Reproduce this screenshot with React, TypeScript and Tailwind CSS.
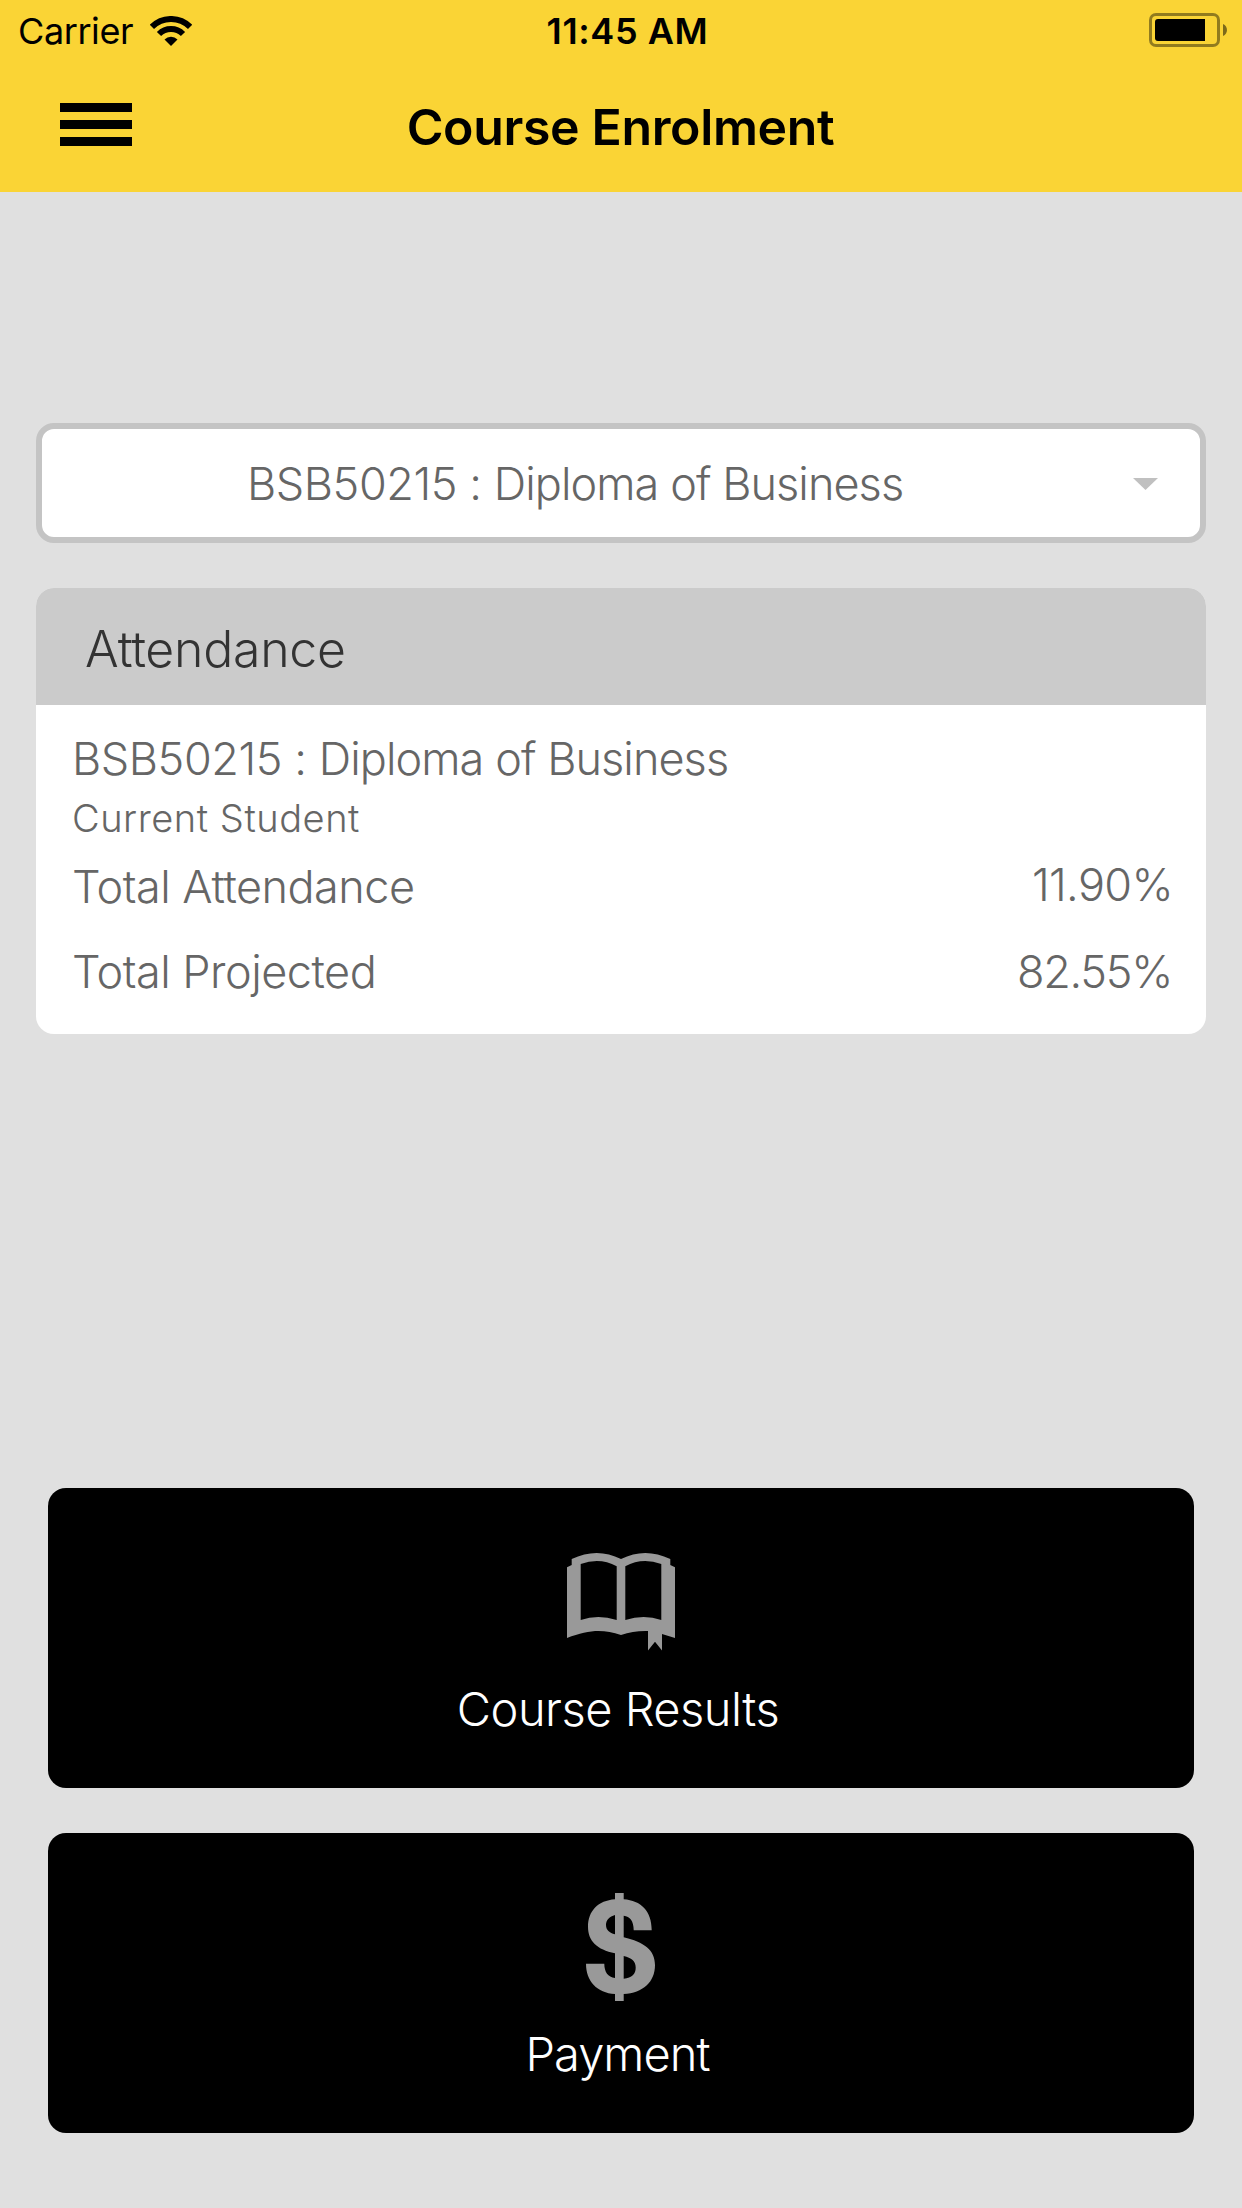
import type { ReactNode } from "react";

function WifiIcon() {
  return (
    <svg className="h-[30px] w-[42px]" viewBox="0 0 42 30" fill="none" stroke="#000" strokeWidth="6">
      <path d="M1.9 10.9A27 27 0 0 1 40.1 10.9" />
      <path d="M9 18A17 17 0 0 1 33 18" />
      <path d="M21 30L14.5 23.4A9.5 9.5 0 0 1 27.5 23.4Z" fill="#000" stroke="none" />
    </svg>
  );
}

function BatteryIcon() {
  return (
    <svg className="h-[34px] w-[78px]" viewBox="0 0 78 34">
      <rect x="1.5" y="1.5" width="68" height="31" rx="5.5" fill="none" stroke="#000" strokeOpacity="0.42" strokeWidth="3" />
      <path d="M9 6H56V28H9Q6 28 6 25V9Q6 6 9 6Z" />
      <path d="M74 11C79.300 13 79.300 21 74 23Z" fillOpacity="0.5" />
    </svg>
  );
}

function MenuIcon() {
  return (
    <div className="flex h-[43px] w-[72px] flex-col justify-between">
      <div className="h-[9px] bg-black" />
      <div className="h-[9px] bg-black" />
      <div className="h-[9px] bg-black" />
    </div>
  );
}

function BookIcon() {
  return (
    <svg className="h-[98px] w-[108px]" viewBox="0 0 108 98" fill="#999999" fillRule="evenodd">
      <path d="M0 14.300L4.700 12V6Q30 -6 54 6Q78 -6 103.300 6V12L108 14.300V85L95 81V97.500L88 88.700L81 97.500V78Q67 77.500 54 82C36 76 22 76.500 0 85ZM13.700 11V67Q31 61 49.700 67V13.300Q33 4 13.700 11ZM94.300 11V67Q77 61 58.300 67V13.300Q75 4 94.300 11Z" />
    </svg>
  );
}

function DollarIcon() {
  return (
    <svg className="mr-[2px] h-[108px] w-[69px]" viewBox="0 0 69 108" fill="#999999" fillRule="evenodd">
      <path d="M29 0H37.700V6.300C55 7.500 65.700 18 65.700 37.300H47.700C47.700 28 44 23.500 37.700 22.700V44.300C58 49 69 57 69 72C69 89 57 100 37.700 101V108H29V101C11 100 0 88 0 70.700H18.300C18.300 79 22 84 29 85V60.300C11 56.500 2 48 2 33.700C2 18 12 7.500 29 6.300ZM29 22C23.500 23.500 20 27 20 32C20 37 23.500 40 29 41.300ZM37.700 63V85.700C46 85 49.700 81 49.700 74.700C49.700 68 45.500 65 37.700 63Z" />
    </svg>
  );
}

function StatusBar() {
  return (
    <div className="grid h-[62px] grid-cols-3 items-center pl-[18px] pr-[15px]">
      <div className="flex items-center gap-[17px]">
        <span className="text-[36px] tracking-[-0.41px]">Carrier</span>
        <WifiIcon />
      </div>
      <span className="pl-[10px] text-center text-[36px] font-semibold tracking-[0.6px]">11:45 AM</span>
      <div className="mb-[2px] flex justify-end">
        <BatteryIcon />
      </div>
    </div>
  );
}

function CourseName() {
  return (
    <span>
      <span className="tracking-[-0.42px]">BSB50215 : </span>
      <span className="tracking-[-0.93px]">Diploma of Business</span>
    </span>
  );
}

function AttendanceRow({ label, value, className, valueClass }: { label: string; value: string; className: string; valueClass: string }) {
  return (
    <div className={`flex items-center justify-between text-[45px] ${className}`}>
      <span className="tracking-[-0.5px]">{label}</span>
      <span className={valueClass}>{value}</span>
    </div>
  );
}

function ActionButton({ className, children }: { className: string; children: ReactNode }) {
  return (
    <button className={`flex h-[300px] w-full flex-col items-center rounded-[18px] bg-black text-[47px] font-light leading-[60px] text-white ${className}`}>
      {children}
    </button>
  );
}

export default function App() {
  return (
    <div className="flex h-[2208px] w-[1242px] flex-col overflow-hidden bg-[#e0e0e0] font-['Inter',sans-serif] leading-none whitespace-nowrap text-black">
      <header className="h-[192px] bg-[#fad435]">
        <StatusBar />
        <div className="grid h-[130px] grid-cols-[1fr_auto_1fr] items-center px-[60px]">
          <div className="mb-[5px]">
            <MenuIcon />
          </div>
          <h1 className="pr-px text-[50px] font-semibold tracking-[-0.35px]">Course Enrolment</h1>
          <span />
        </div>
      </header>

      <main className="flex flex-1 flex-col px-[36px] pt-[231px] font-light text-[#666666]">
        <div className="flex h-[120px] items-center justify-between rounded-[18px] border-[6px] border-[#c4c4c4] bg-white pl-[205px] pr-[42px] text-[45px]">
          <CourseName />
          <svg className="mt-[2px] h-[12px] w-[25px]" viewBox="0 0 25 12" fill="#c0c0c0">
            <path d="M0 0H25L12.500 12Z" />
          </svg>
        </div>

        <section className="mt-[45px] h-[446px] overflow-hidden rounded-[18px] bg-white">
          <h2 className="flex h-[117px] items-center bg-[#cbcbcb] pt-[5px] pl-[49px] text-[50px] tracking-[-0.28px] text-[#333333]">
            Attendance
          </h2>
          <div className="pt-[27px] pr-[33px] pl-[36px]">
            <p className="text-[45px] leading-[54px]">
              <CourseName />
            </p>
            <p className="text-[38px] leading-[64px] tracking-[0.54px]">Current Student</p>
            <AttendanceRow label="Total Attendance" value="11.90%" className="h-[73px]" valueClass="mb-[5px] tracking-[-0.64px]" />
            <AttendanceRow label="Total Projected" value="82.55%" className="h-[96px]" valueClass="pr-px tracking-[-1.300px]" />
          </div>
        </section>

        <div className="mt-[454px] flex flex-col gap-[45px] px-[12px]">
          <ActionButton className="pt-[65px]">
            <BookIcon />
            <span className="mt-[28px] pr-[6px] tracking-[-0.5px]">Course Results</span>
          </ActionButton>
          <ActionButton className="pt-[60px]">
            <DollarIcon />
            <span className="mt-[23px] pr-[7px] tracking-[-0.94px]">Payment</span>
          </ActionButton>
        </div>
      </main>
    </div>
  );
}
